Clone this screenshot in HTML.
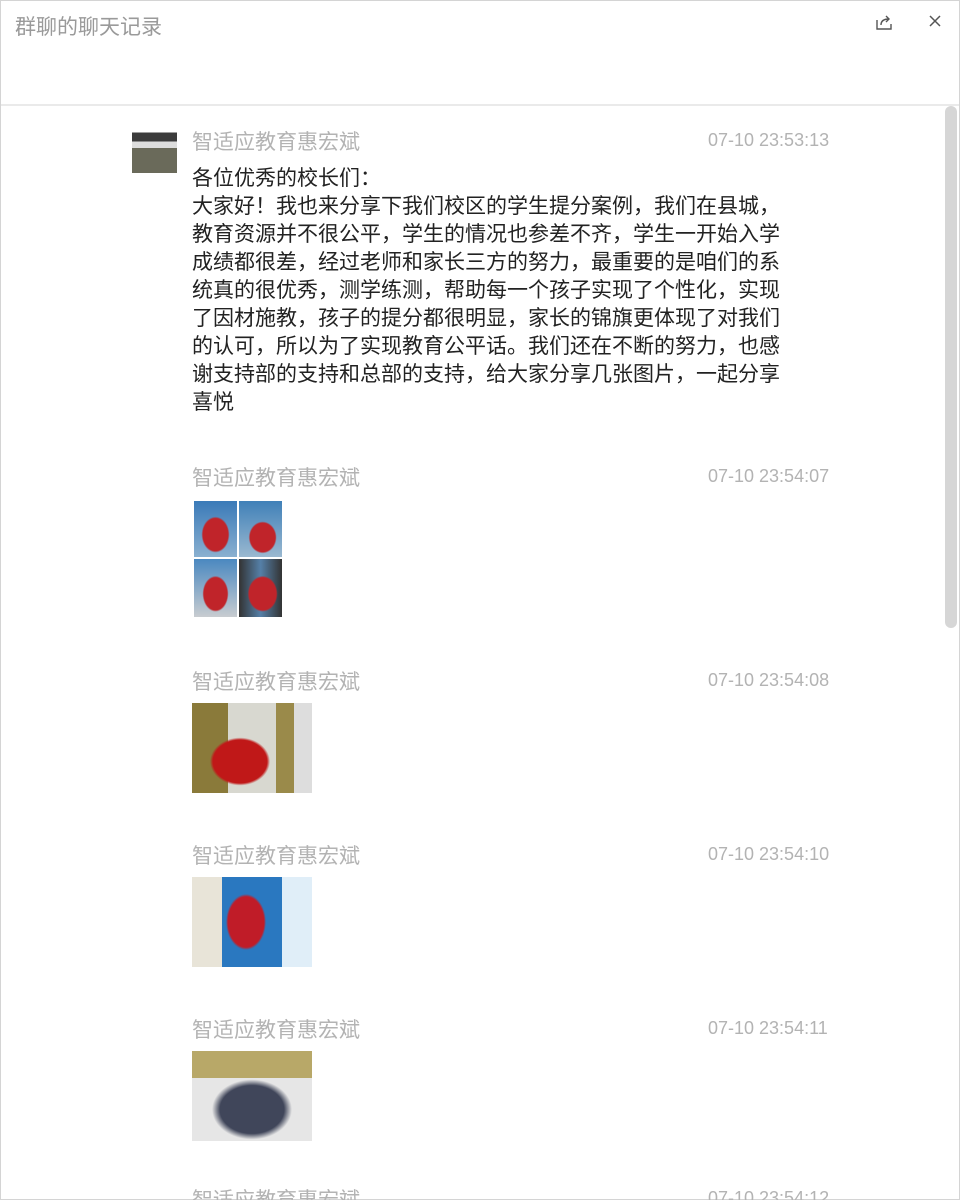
<!DOCTYPE html>
<html><head><meta charset="utf-8"><style>
*{margin:0;padding:0;box-sizing:border-box}
html,body{width:960px;height:1200px;overflow:hidden}
body{background:#fff;font-family:"Liberation Sans","Noto Sans CJK SC",sans-serif;position:relative}
.frame{position:absolute;left:0;top:0;width:960px;height:1200px;border:1px solid #d4d4d4}
.title{position:absolute;left:15px;top:11px;font-size:21px;color:#9a9a9a}
.hdr{position:absolute;left:1px;right:1px;top:104px;height:2px;background:#eaeaea}
.sb{position:absolute;left:945px;top:106px;width:12px;height:522px;background:#d6d6d6;border-radius:6px}
.name{position:absolute;left:192px;font-size:21px;color:#b3b3b3;line-height:24px}
.time{position:absolute;left:708px;font-size:18px;color:#b3b3b3;line-height:24px}
.msg{position:absolute;left:192px;top:165px;font-size:21px;line-height:28px;color:#222;white-space:nowrap}
.img{position:absolute;left:192px}
</style></head><body>
<div class="frame"></div>
<div class="title">群聊的聊天记录</div>
<svg style="position:absolute;left:874px;top:12px" width="20" height="20" viewBox="0 0 20 20" fill="none" stroke="#555" stroke-width="1.4"><path d="M3 8v9h14v-5"/><path d="M7 13c0-4 3-6 8-6"/><path d="M12 4l3 3-3 3"/></svg>
<svg style="position:absolute;left:927px;top:13px" width="16" height="16" viewBox="0 0 16 16" stroke="#555" stroke-width="1.5"><path d="M3 3l10 10M13 3L3 13"/></svg>
<div class="hdr"></div>
<div class="sb"></div>

<div style="position:absolute;left:132px;top:128px;width:45px;height:45px;background:linear-gradient(#fff 0 10%,#3b3b3b 10% 30%,#ddd 30% 45%,#6a6a5a 45% 100%)"></div>
<div class="name" style="top:131px">智适应教育惠宏斌</div>
<div class="time" style="top:128px">07-10 23:53:13</div>
<div class="msg">各位优秀的校长们：<br>大家好！我也来分享下我们校区的学生提分案例，我们在县城，<br>教育资源并不很公平，学生的情况也参差不齐，学生一开始入学<br>成绩都很差，经过老师和家长三方的努力，最重要的是咱们的系<br>统真的很优秀，测学练测，帮助每一个孩子实现了个性化，实现<br>了因材施教，孩子的提分都很明显，家长的锦旗更体现了对我们<br>的认可，所以为了实现教育公平话。我们还在不断的努力，也感<br>谢支持部的支持和总部的支持，给大家分享几张图片，一起分享<br>喜悦</div>

<div class="name" style="top:467px">智适应教育惠宏斌</div>
<div class="time" style="top:464px">07-10 23:54:07</div>
<div class="img" style="left:194px;top:501px;width:88px;height:116px">
<div style="position:absolute;left:0;top:0;width:43px;height:56px;background:radial-gradient(ellipse 14px 18px at 50% 60%,#c0242a 90%,transparent 100%),linear-gradient(#3a7ab8,#8ab0d0)"></div>
<div style="position:absolute;left:45px;top:0;width:43px;height:56px;background:radial-gradient(ellipse 14px 16px at 55% 65%,#c0242a 90%,transparent 100%),linear-gradient(#4080b8,#9ab8d0)"></div>
<div style="position:absolute;left:0;top:58px;width:43px;height:58px;background:radial-gradient(ellipse 13px 18px at 50% 60%,#c0242a 90%,transparent 100%),linear-gradient(#4a88c0,#c8ccd0)"></div>
<div style="position:absolute;left:45px;top:58px;width:43px;height:58px;background:radial-gradient(ellipse 15px 18px at 55% 60%,#c0242a 90%,transparent 100%),linear-gradient(90deg,#333,#5580a8 50%,#333)"></div>
</div>

<div class="name" style="top:671px">智适应教育惠宏斌</div>
<div class="time" style="top:668px">07-10 23:54:08</div>
<div class="img" style="top:703px;width:120px;height:90px;background:radial-gradient(ellipse 30px 24px at 40% 65%,#c01818 90%,transparent 100%),linear-gradient(90deg,#8a7a3a 0 30%,#d8d8d0 30% 70%,#9a8a4a 70% 85%,#ddd 85%)"></div>

<div class="name" style="top:845px">智适应教育惠宏斌</div>
<div class="time" style="top:842px">07-10 23:54:10</div>
<div class="img" style="top:877px;width:120px;height:90px;background:radial-gradient(ellipse 20px 28px at 45% 50%,#c01c28 90%,transparent 100%),linear-gradient(90deg,#e8e4d8 0 25%,#2a78c0 25% 75%,#e0eef8 75%)"></div>

<div class="name" style="top:1019px">智适应教育惠宏斌</div>
<div class="time" style="top:1016px">07-10 23:54:11</div>
<div class="img" style="top:1051px;width:120px;height:90px;background:linear-gradient(#b8a868 0 30%,transparent 30%),radial-gradient(ellipse 40px 30px at 50% 65%,#40465a 80%,transparent 100%),#e6e6e6"></div>

<div class="name" style="top:1189px">智适应教育惠宏斌</div>
<div class="time" style="top:1186px">07-10 23:54:12</div>
</body></html>
